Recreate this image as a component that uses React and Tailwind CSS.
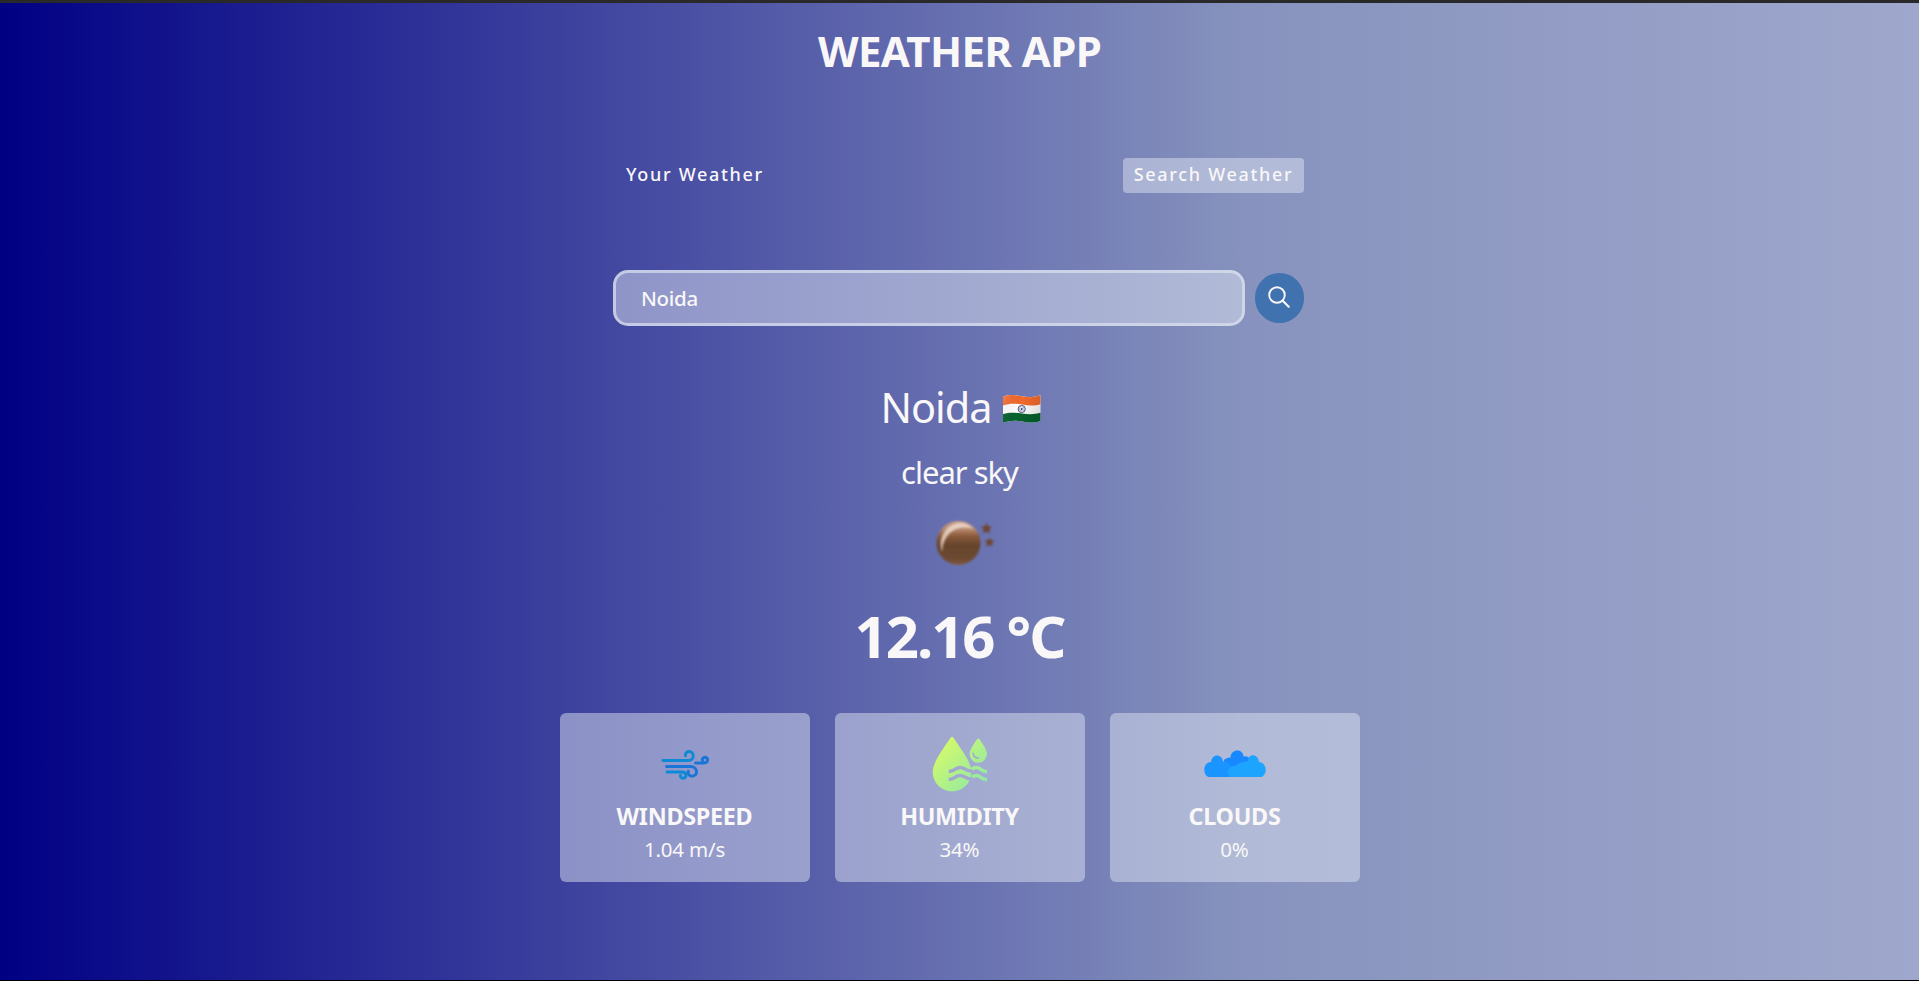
import React from "react";

function NightIcon() {
  return (
    <svg width="62" height="48" viewBox="0 0 62 48" className="block">
      <defs>
        <linearGradient id="moon" x1="0" y1="0" x2="0" y2="1">
          <stop offset="0" stopColor="#c9a48c" />
          <stop offset="0.18" stopColor="#b98c70" />
          <stop offset="0.34" stopColor="#8a5a3b" />
          <stop offset="0.55" stopColor="#65442d" />
          <stop offset="0.85" stopColor="#6c4a31" />
          <stop offset="1" stopColor="#80583f" />
        </linearGradient>
        <filter id="soft" x="-30%" y="-30%" width="160%" height="160%">
          <feGaussianBlur stdDeviation="0.9" />
        </filter>
      </defs>
      <circle cx="23.500" cy="25" r="22" fill="url(#moon)" filter="url(#soft)" />
      <path d="M7 34C3 21 9 7 24 5C30 5 35 7 38 10.500C24 7 9 12 7 34Z" fill="#f3e2d8" opacity="0.75" filter="url(#soft)" />
      <g fill="#6d4735" filter="url(#soft)">
        <path d="M51.500 5l1.800 3.200 3.900.5-2.800 2.700.7 4-3.600-1.900-3.600 1.900.7-4-2.800-2.700 3.900-.5z" />
        <path d="M54.500 19.500l1.700 2.800 3.300.5-2.400 2.400.6 3.400-3.200-1.600-3.200 1.600.6-3.400-2.400-2.400 3.300-.5z" />
      </g>
    </svg>
  );
}

function IndiaFlag() {
  return (
    <svg width="38" height="28" viewBox="0 0 38 28" className="mt-1 block">
      <defs>
        <clipPath id="wave">
          <path d="M0 1.500C6-.8 12-.2 19 1.300C26 2.700 31 2.300 37.500.3V26C31 28.300 25 27.800 18 26.200C11 25 6 25.800 0 27.800Z" />
        </clipPath>
        <linearGradient id="fold" x1="0" x2="1" y1="0" y2="0.300">
          <stop offset="0" stopColor="#fff" stopOpacity="0.150" />
          <stop offset="0.500" stopColor="#000" stopOpacity="0" />
          <stop offset="1" stopColor="#000" stopOpacity="0.120" />
        </linearGradient>
      </defs>
      <g clipPath="url(#wave)">
        <rect width="38" height="28" fill="#fff" />
        <path d="M0-2H38V9C31 11.500 25 10.500 19 9.500C11 8.200 6 8.500 0 10.500Z" fill="#f36a2c" />
        <path d="M0 19C7 17 12 17.500 19 18.500C26 19.500 32 19.500 38 17.500V30H0Z" fill="#07642f" />
        <rect width="38" height="28" fill="url(#fold)" />
      </g>
      <circle cx="18.700" cy="14" r="3.600" fill="none" stroke="#4d5285" strokeWidth="1" />
      <circle cx="18.700" cy="14" r="2.300" fill="none" stroke="#8a8eb5" strokeWidth="1.500" strokeDasharray="0.700 0.700" />
      <circle cx="18.700" cy="14" r="1" fill="#33386f" />
    </svg>
  );
}

function WindIcon() {
  return (
    <svg width="50" height="50" viewBox="0.500 0 50 50" fill="none" strokeWidth="2.900" strokeLinecap="round" className="block">
      <path d="M3.300 21.500H29C35.500 21.500 35 12.500 29.500 12.500C27 12.500 25.500 14.500 26 16.800" stroke="#0b8bd6" />
      <path d="M7.500 33H22C28 33 27.500 39.300 23.500 39.300C21.500 39.300 20.500 37.500 21 36.300" stroke="#0b8bd6" />
      <path d="M7 27.500H31C38.500 27.500 39 37.200 32.500 37.200C29.500 37.200 28.200 34.800 28.800 32.200" stroke="#1a75d8" />
      <path d="M36 24H44C49.500 24 49 18.300 45.500 18.300C43.400 18.300 42.500 20 43 21.300" stroke="#1a75d8" />
    </svg>
  );
}

function HumidityIcon() {
  return (
    <svg width="56" height="56" viewBox="0 0 56 56" className="block">
      <defs>
        <linearGradient id="lime" x1="4" y1="8" x2="48" y2="50" gradientUnits="userSpaceOnUse">
          <stop offset="0" stopColor="#d8fb67" />
          <stop offset="1" stopColor="#90e9a4" />
        </linearGradient>
        <mask id="ripples">
          <rect width="56" height="56" fill="#fff" />
          <path d="M18.500 35.200C22.500 35.200 23.500 31.500 28 31.500C32.500 31.500 33.500 35.200 40 35.200M18.500 43.200C22.500 43.200 23.500 39.500 28 39.500C32.500 39.500 33.500 43.200 40 43.200" fill="none" stroke="#000" strokeWidth="3.500" strokeLinecap="square" />
        </mask>
      </defs>
      <path d="M18.300 2.100Q20-.7 21.700 2.100C26.500 10 39.500 25.500 39.500 36A19.400 19.400 0 0 1 .7 36C.7 25.500 13.500 10 18.300 2.100Z" fill="url(#lime)" mask="url(#ripples)" />
      <path d="M45 3.300Q46.300 1.500 47.600 3.300C49.800 7 55 13.500 55 18A8.700 8.700 0 0 1 37.600 18C37.600 13.500 42.800 7 45 3.300Z" fill="url(#lime)" />
      <path d="M41.200 17.500Q41.700 21.800 46 22" fill="none" stroke="#a5add1" strokeWidth="1.900" strokeLinecap="round" />
      <g fill="none" stroke="url(#lime)" strokeWidth="3.500">
        <path d="M39.800 33.200C43 31 46 31 48.500 33.200Q51.500 35.700 55 35.500" />
        <path d="M40.200 41.200C43 39 46 39 48.500 41.200Q51.500 43.700 55 43.500" />
      </g>
    </svg>
  );
}

function CloudsIcon() {
  return (
    <svg width="62" height="28" viewBox="0 0 62 28" className="block">
      <path d="M20 27V10Q22 7.500 26.500 7.500C27-1.500 39-1.500 39.500 6.500Q43 5.500 46 8.500V27Z" fill="#1788ff" />
      <path d="M4.500 27C-1.500 24.500-1.500 12.500 7 12C8 3 18 3.500 19 11.500C25 11 27 15 27 19L32 27Z" fill="#1a94ff" />
      <path d="M26 27C22.500 23 23.500 16 32 15.500Q36 11 43.500 11.500C44.500 3 54 3.500 55 12C63.500 13 63.500 24.500 57.500 27Z" fill="#1da4ff" />
    </svg>
  );
}

function StatCard({ icon, title, value }) {
  return (
    <div className="flex h-[169px] w-[250px] flex-col items-center rounded-md bg-[#dbe2ef]/50">
      <div className="mt-[15px] flex h-[71px] items-center justify-center">{icon}</div>
      <p className="text-[23.4px] leading-[34px] font-bold tracking-[-0.3px] uppercase">{title}</p>
      <p className="text-[20.5px] leading-[32px] tracking-[-0.2px]">{value}</p>
    </div>
  );
}

export default function App() {
  return (
    <div className="flex h-[981px] w-full flex-col overflow-hidden border-t-[3px] border-b border-t-[#292929] border-b-black bg-[linear-gradient(90deg,#000084_0%,#4247a0_32%,#8793be_65%,#9fa7cc_100%)] font-['Noto_Sans',sans-serif] text-[#f9f7f7]">
      <h1 className="mt-[23px] text-center text-[42px] leading-[50px] font-bold tracking-[-0.6px]">WEATHER APP</h1>

      <nav className="mx-auto mt-[82px] flex h-[35px] w-[693px] items-center justify-between pr-[2px] text-[18px] font-medium tracking-[1.7px]">
        <button className="pb-[2px] pl-[13px]">Your Weather</button>
        <button className="h-[35px] w-[181px] rounded bg-[#dbe2ef]/50 pb-[2px] whitespace-nowrap">Search Weather</button>
      </nav>

      <form className="mx-auto mt-[77px] flex w-[693px] items-center justify-between pr-[2px]" onSubmit={(e) => e.preventDefault()}>
        <input
          className="h-[56px] w-[632px] rounded-[15px] border-[3px] border-[#dbe2ef]/70 bg-[#dbe2ef]/50 px-[25px] text-[20.5px] font-medium tracking-[-0.3px] outline-none"
          defaultValue="Noida"
          aria-label="City"
        />
        <button className="flex h-[50px] w-[49px] items-center justify-center rounded-full bg-[#3f72af]" aria-label="Search">
          <svg width="22" height="22" viewBox="0 0 22 22" fill="none" stroke="#f9f7f7" strokeWidth="1.900" strokeLinecap="round" className="mr-[2px] mb-[3px]">
            <circle cx="9" cy="9" r="7.800" />
            <path d="M14.700 14.700L20.700 20.700" strokeWidth="2.200" />
          </svg>
        </button>
      </form>

      <section className="flex flex-col items-center">
        <div className="mt-[54px] flex h-[54px] items-center gap-[11px] pl-[2px]">
          <p className="text-[41.5px] leading-[54px] tracking-[-1px]">Noida</p>
          <IndiaFlag />
        </div>
        <p className="mt-[18px] text-[31px] leading-[40px] tracking-[-1px]">clear sky</p>
        <div className="mt-[26px] h-[48px] pl-[12px]"><NightIcon /></div>
        <p className="mt-[30px] text-[58px] leading-[80px] font-bold tracking-[-2px]">12.16 °C</p>
        <div className="mt-[37px] flex gap-[25px]">
          <StatCard icon={<WindIcon />} title="Windspeed" value="1.04 m/s" />
          <StatCard icon={<HumidityIcon />} title="Humidity" value="34%" />
          <StatCard icon={<CloudsIcon />} title="Clouds" value="0%" />
        </div>
      </section>
    </div>
  );
}
